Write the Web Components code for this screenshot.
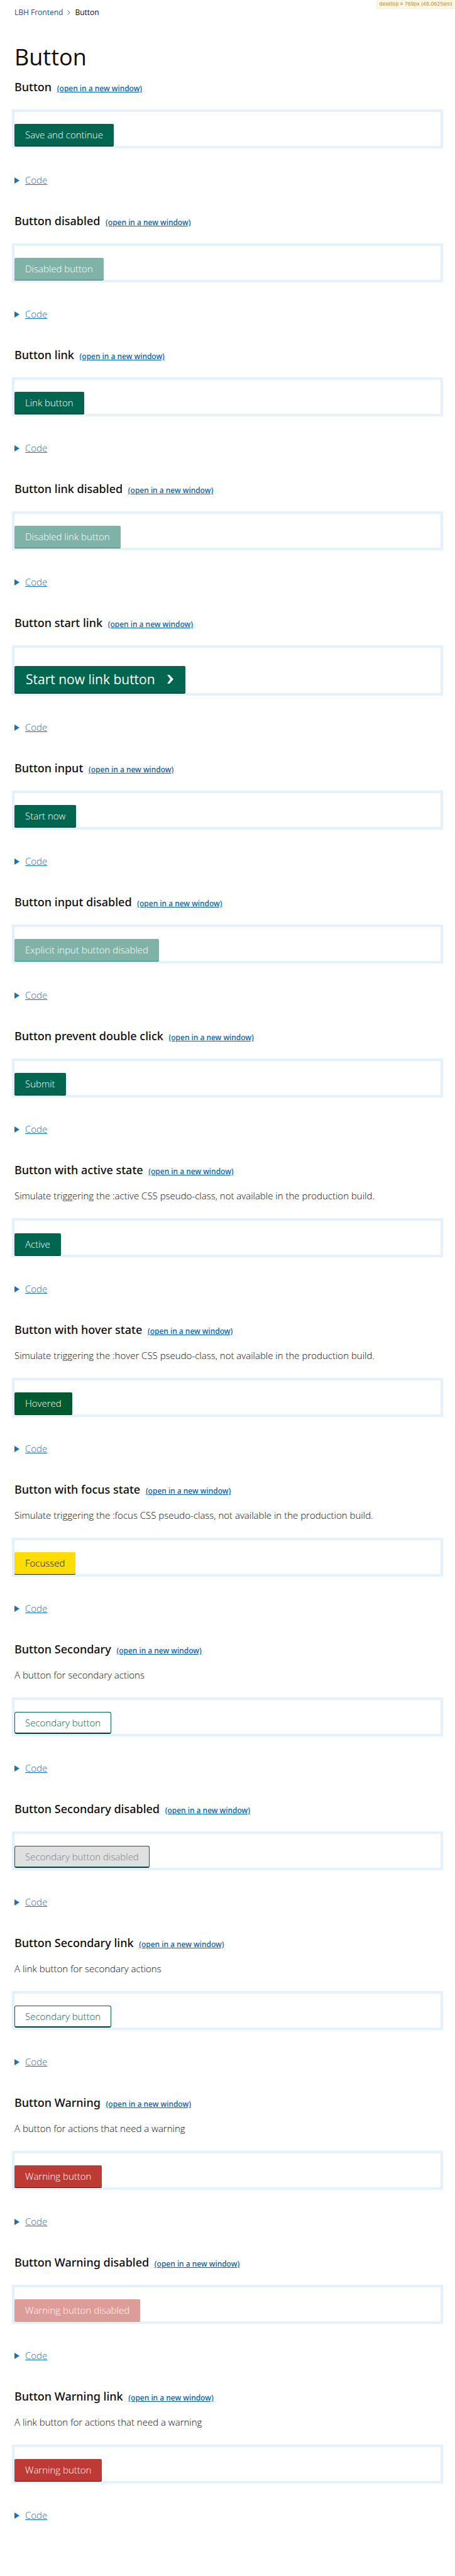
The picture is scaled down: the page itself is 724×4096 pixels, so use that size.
<!DOCTYPE html>
<html lang="en">
<head>
<meta charset="utf-8">
<meta name="viewport" content="width=device-width, initial-scale=1">
<title>Button - LBH Frontend</title>
<style>
  body {
    margin: 0;
    background: #fff;
    color: #0b0c0c;
    font-family: "Open Sans", "Noto Sans", sans-serif;
    font-size: 15px;
    line-height: 20px;
  }
</style>
</head>
<body>
<lbh-page>
  <lbh-breakpoint slot="badge">desktop ≥ 769px (48.0625em)</lbh-breakpoint>
  <lbh-breadcrumbs slot="nav" parent="LBH Frontend">Button</lbh-breadcrumbs>
  <lbh-title>Button</lbh-title>
  <lbh-example heading="Button"><lbh-button label="Save and continue"></lbh-button></lbh-example>
  <lbh-example heading="Button disabled"><lbh-button label="Disabled button" disabled></lbh-button></lbh-example>
  <lbh-example heading="Button link"><lbh-button kind="link" label="Link button"></lbh-button></lbh-example>
  <lbh-example heading="Button link disabled"><lbh-button kind="link" label="Disabled link button" disabled></lbh-button></lbh-example>
  <lbh-example heading="Button start link"><lbh-button kind="start" label="Start now link button"></lbh-button></lbh-example>
  <lbh-example heading="Button input"><lbh-button kind="input" label="Start now"></lbh-button></lbh-example>
  <lbh-example heading="Button input disabled"><lbh-button kind="input" label="Explicit input button disabled" disabled></lbh-button></lbh-example>
  <lbh-example heading="Button prevent double click"><lbh-button label="Submit"></lbh-button></lbh-example>
  <lbh-example heading="Button with active state" note="Simulate triggering the :active CSS pseudo-class, not available in the production build."><lbh-button state="active" label="Active"></lbh-button></lbh-example>
  <lbh-example heading="Button with hover state" note="Simulate triggering the :hover CSS pseudo-class, not available in the production build."><lbh-button state="hover" label="Hovered"></lbh-button></lbh-example>
  <lbh-example heading="Button with focus state" note="Simulate triggering the :focus CSS pseudo-class, not available in the production build."><lbh-button state="focus" label="Focussed"></lbh-button></lbh-example>
  <lbh-example heading="Button Secondary" note="A button for secondary actions"><lbh-button variant="secondary" label="Secondary button"></lbh-button></lbh-example>
  <lbh-example heading="Button Secondary disabled"><lbh-button variant="secondary" label="Secondary button disabled" disabled></lbh-button></lbh-example>
  <lbh-example heading="Button Secondary link" note="A link button for secondary actions"><lbh-button kind="link" variant="secondary" label="Secondary button"></lbh-button></lbh-example>
  <lbh-example heading="Button Warning" note="A button for actions that need a warning"><lbh-button variant="warning" label="Warning button"></lbh-button></lbh-example>
  <lbh-example heading="Button Warning disabled"><lbh-button variant="warning" label="Warning button disabled" disabled></lbh-button></lbh-example>
  <lbh-example heading="Button Warning link" note="A link button for actions that need a warning"><lbh-button kind="link" variant="warning" label="Warning button"></lbh-button></lbh-example>
</lbh-page>

<script>
  const attach = (el, html) => { el.attachShadow({ mode: 'open' }).innerHTML = html; };

  customElements.define('lbh-page', class extends HTMLElement {
    connectedCallback() {
      attach(this, `
        <style>
          :host { display: block; position: relative; box-sizing: border-box; min-height: 100vh; padding: 12px 23px 40px; }
          main { display: flex; flex-direction: column; }
        </style>
        <slot name="badge"></slot>
        <slot name="nav"></slot>
        <main><slot></slot></main>`);
    }
  });

  customElements.define('lbh-breakpoint', class extends HTMLElement {
    connectedCallback() {
      attach(this, `
        <style>
          :host {
            position: absolute; top: 0; right: 0; padding: 0 4px;
            background: #fff7e0; border: solid #fbeed2; border-width: 0 0 1px 1px;
            color: #c29a52; font: 500 8px/13px Inter, sans-serif;
          }
        </style>
        <slot></slot>`);
    }
  });

  customElements.define('lbh-breadcrumbs', class extends HTMLElement {
    connectedCallback() {
      attach(this, `
        <style>
          :host { display: block; font-size: 12px; line-height: 16px; }
          ol { display: flex; align-items: center; gap: 7px; margin: 0; padding: 0; list-style: none; }
          li { display: flex; align-items: center; gap: 7px; }
          a { color: #025ea6; font-weight: 500; text-decoration: none; }
          svg { display: block; }
        </style>
        <nav aria-label="Breadcrumb"><ol>
          <li><a href="#">${this.getAttribute('parent')}</a></li>
          <li>
            <svg width="5" height="8" viewBox="0 0 5 8" aria-hidden="true"><path d="M.6.6 4.2 4 .6 7.4" fill="none" stroke="#505a5f"/></svg>
            <span><slot></slot></span>
          </li>
        </ol></nav>`);
    }
  });

  customElements.define('lbh-title', class extends HTMLElement {
    connectedCallback() {
      attach(this, `
        <style>
          :host { display: block; margin: 43px 0 15px; }
          h1 { margin: 0; font-size: 36px; line-height: 40px; font-weight: 500; }
        </style>
        <h1><slot></slot></h1>`);
    }
  });

  customElements.define('lbh-example', class extends HTMLElement {
    connectedCallback() {
      const note = this.getAttribute('note');
      attach(this, `
        <style>
          :host { display: block; margin-bottom: 43px; }
          h2 { margin: 0; font: 500 18px/24px "Noto Sans", "Open Sans", sans-serif; }
          h2 a { margin-left: 4px; font-size: 12px; line-height: 12px; color: #025ea6; }
          p { margin: 19px 0 26px; font-weight: 300; }
          .preview { margin: 24px -4px 40px; padding-top: 19px; border: 4px solid #e3f1ff; }
          summary {
            display: flex; align-items: baseline; gap: 9px; width: fit-content;
            list-style: none; color: #1d70b8; font-weight: 300; cursor: pointer;
          }
          summary::before {
            content: ""; border: solid transparent; border-width: 5px 0 5px 8px;
            border-left-color: #1d70b8;
          }
          summary span { text-decoration: underline; }
          summary::-webkit-details-marker { display: none; }
        </style>
        <section>
          <h2>${this.getAttribute('heading')} <a href="#" target="_blank">(open in a new window)</a></h2>
          ${note ? `<p>${note}</p>` : ''}
          <div class="preview"><slot></slot></div>
          <details><summary><span>Code</span></summary></details>
        </section>`);
    }
  });

  customElements.define('lbh-button', class extends HTMLElement {
    connectedCallback() {
      const label = this.getAttribute('label');
      const kind = this.getAttribute('kind');
      const off = this.hasAttribute('disabled');
      const control =
        kind === 'input' ? `<input class="btn" type="submit" value="${label}"${off ? ' disabled' : ''}>` :
        kind === 'link' ? `<a class="btn" href="#" role="button"${off ? ' aria-disabled="true"' : ''}>${label}</a>` :
        kind === 'start' ? `<a class="btn" href="#" role="button">${label}<svg width="10" height="14" viewBox="0 0 10 14" aria-hidden="true"><path d="M0 0H3.6L10 7 3.6 14H0L5 7z" fill="#fff"/></svg></a>` :
        `<button class="btn" type="button"${off ? ' disabled' : ''}>${label}</button>`;
      attach(this, `
        <style>
          :host { display: flex; --bg: #00664f; --edge: #002e1c; --ink: #fff; }
          :host([disabled]) { --bg: #80b3a7; --edge: #2f8270; }
          :host([state="hover"]) { --bg: #005a30; --edge: #00341c; }
          :host([state="focus"]) { --bg: #fd0; --edge: #0b0c0c; --ink: #0b0c0c; }
          :host([variant="warning"]) { --bg: #be3a34; --edge: #4f1310; }
          :host([variant="warning"][disabled]) { --bg: #de9c98; --edge: #8abdb7; }
          :host([variant="secondary"]) { --bg: #fff; --edge: #003e30; --ink: #00664f; }
          :host([variant="secondary"][disabled]) { --bg: #dee0e2; --ink: #7d8487; }
          .btn {
            display: flex; align-items: center; box-sizing: border-box; margin: 0;
            padding: 7px 17px 8px; border: 0; border-radius: 2px;
            background: var(--bg); box-shadow: 0 1px 0 var(--edge); color: var(--ink);
            font-family: inherit; font-size: 15px; line-height: 20px; font-weight: 300;
            text-decoration: none; cursor: pointer;
          }
          :host([state="active"]) .btn { transform: translateY(1px); }
          :host([variant="secondary"]) .btn {
            padding: 6px 16px; border: 1px solid #00664f; border-bottom: 2px solid var(--edge);
            border-radius: 3px; box-shadow: none;
          }
          :host([kind="start"]) .btn {
            gap: 19px; margin-top: 10px; padding: 8px 19px 9px 18px;
            font-size: 21px; line-height: 26px; font-weight: 500;
          }
        </style>
        ${control}`);
    }
  });
</script>
</body>
</html>
